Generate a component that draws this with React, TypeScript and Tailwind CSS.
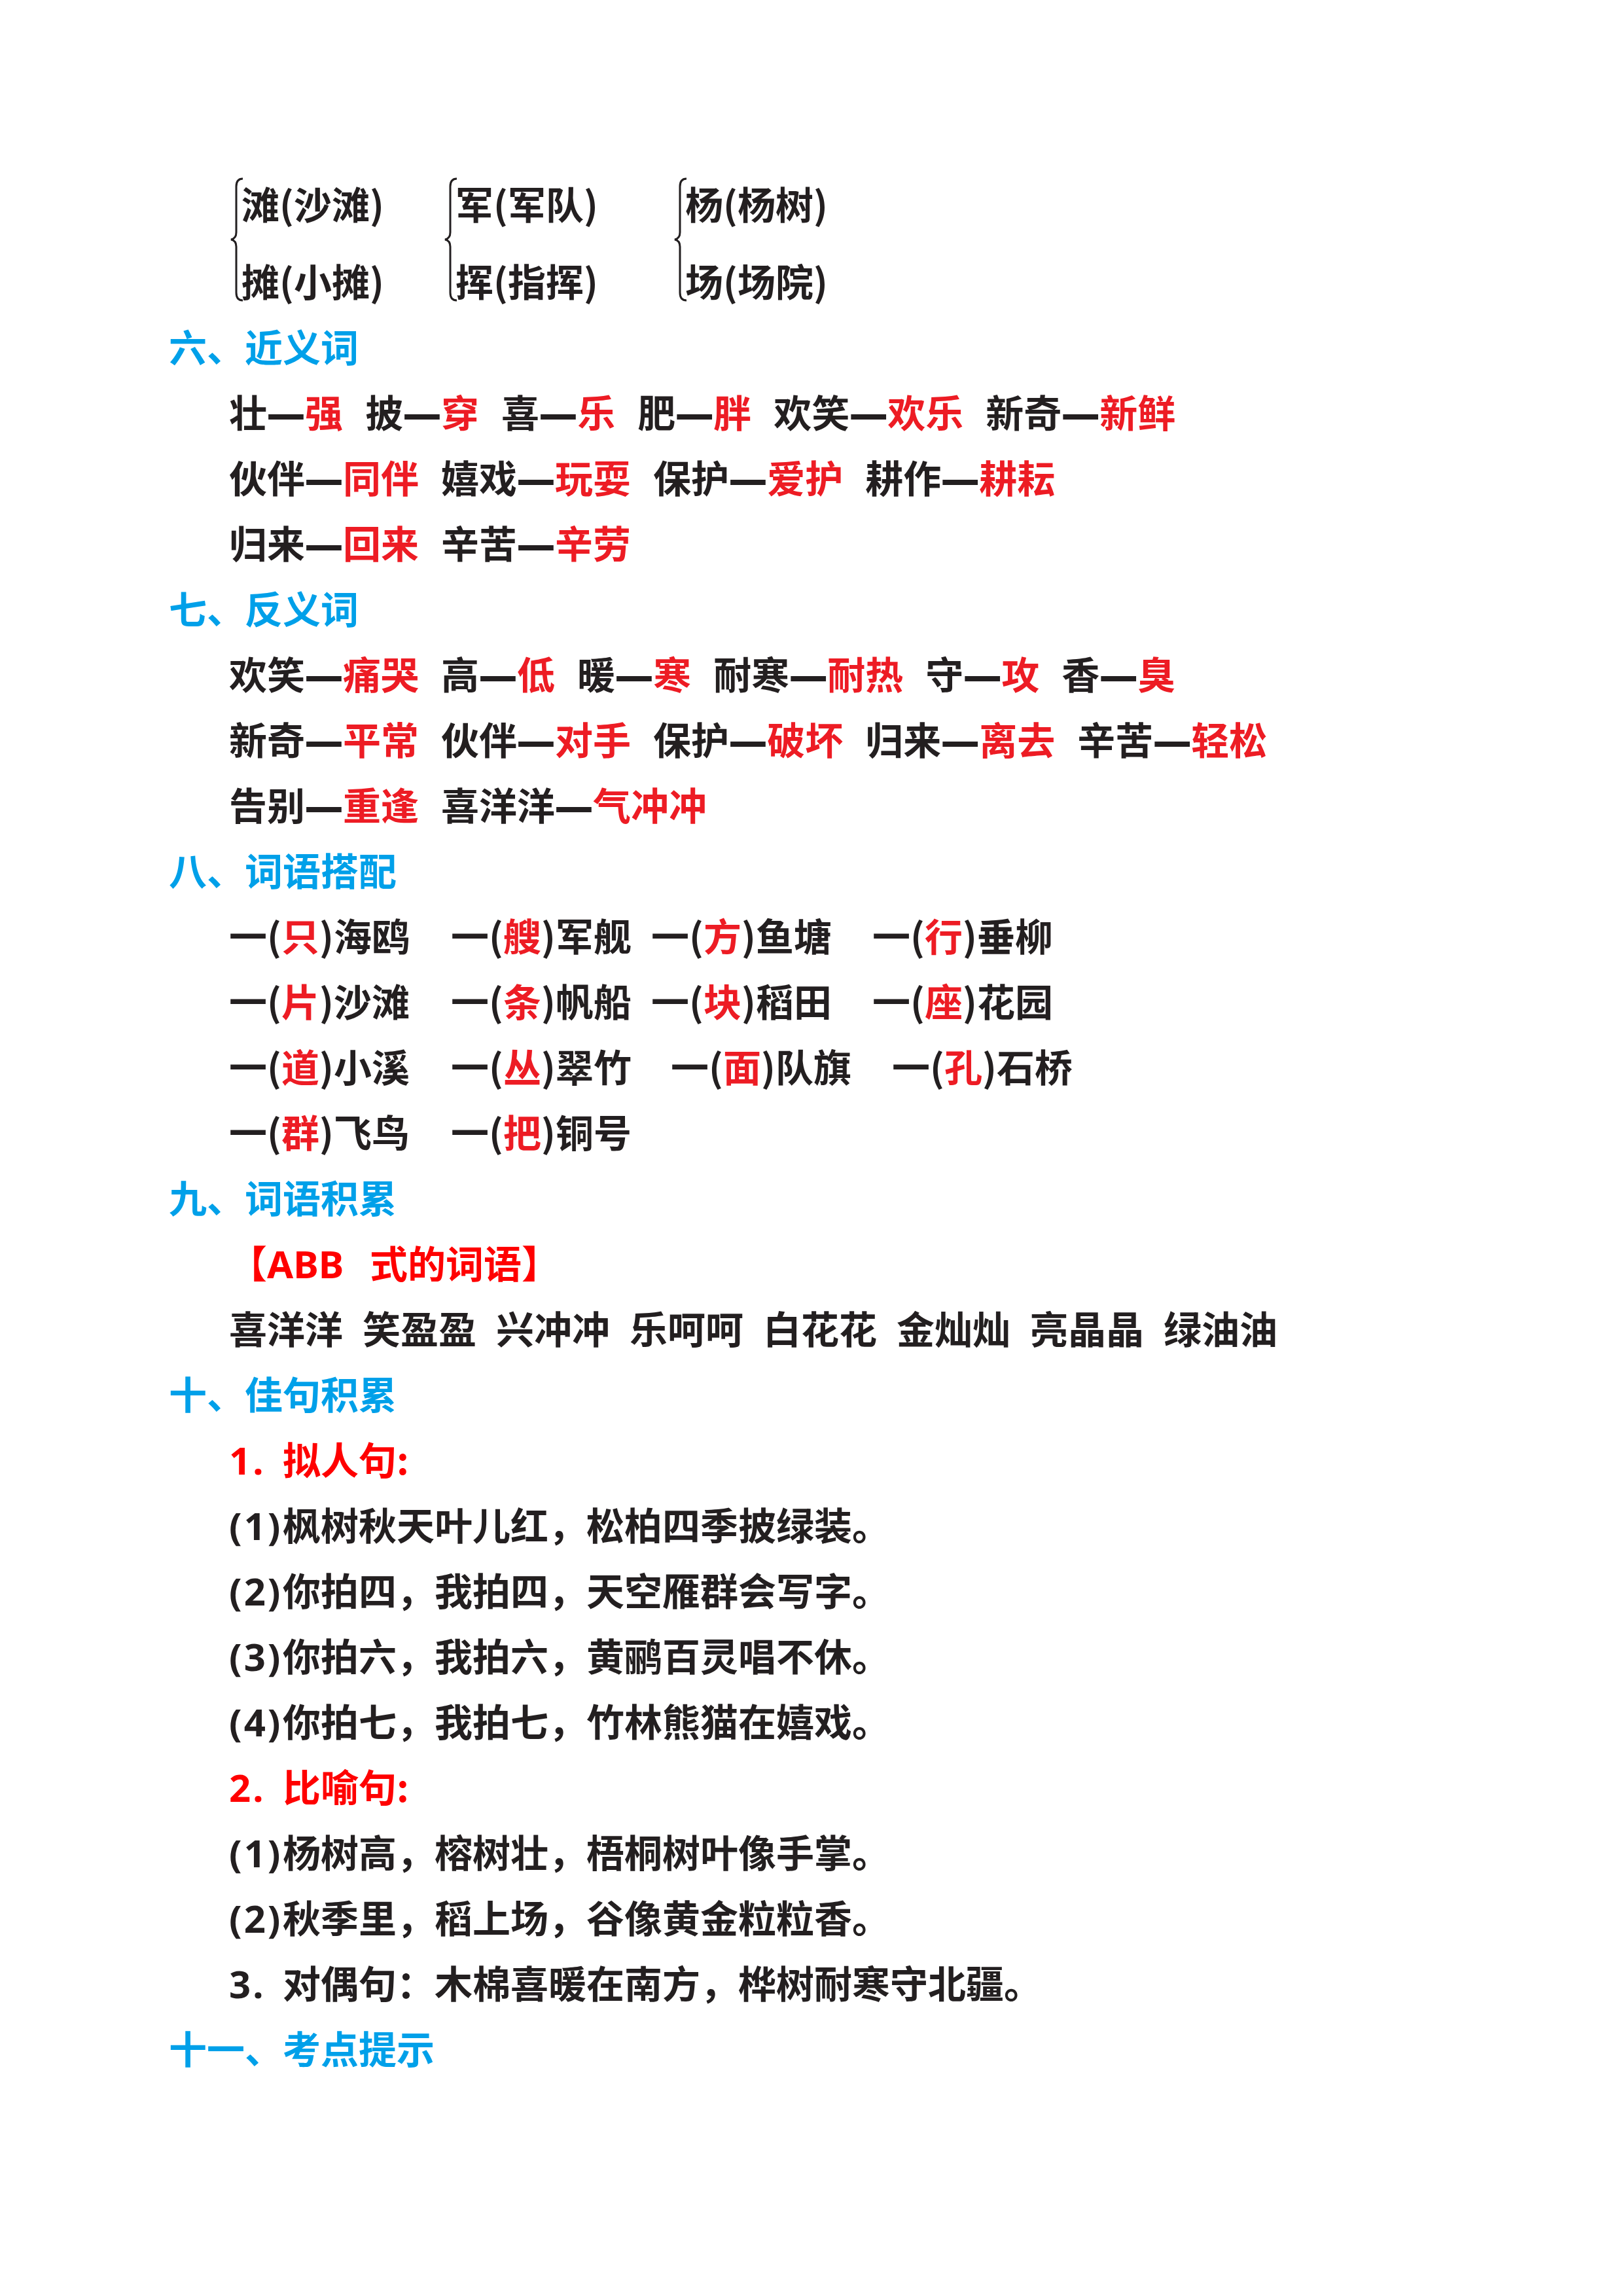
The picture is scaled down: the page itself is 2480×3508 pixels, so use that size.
import type { ReactNode } from "react";

const R = ({ children }: { children: ReactNode }) => <span className="text-[#ed1c24]">{children}</span>;

// em dash from Noto Sans: a full em wide and heavy enough
const Dash = () => <span className="font-black font-['Noto_Sans',sans-serif]">—</span>;

function Brace() {
  return (
    <svg viewBox="0 0 22 190" className="w-[22px] h-[190px] shrink-0">
      <path
        d="M20 2 C13 2 10 6 10 14 L10 84 C10 91 7 94 2 95 C7 96 10 99 10 106 L10 176 C10 184 13 188 20 188"
        fill="none"
        stroke="#231f20"
        strokeWidth="3"
      />
    </svg>
  );
}

const braces = [
  { w: "w-[327px]", rows: ["滩(沙滩)", "摊(小摊)"] },
  { w: "w-[351px]", rows: ["军(军队)", "挥(指挥)"] },
  { w: "", rows: ["杨(杨树)", "场(场院)"] },
];

type Pair = [string, string];

const synonyms: Pair[][] = [
  [["壮", "强"], ["披", "穿"], ["喜", "乐"], ["肥", "胖"], ["欢笑", "欢乐"], ["新奇", "新鲜"]],
  [["伙伴", "同伴"], ["嬉戏", "玩耍"], ["保护", "爱护"], ["耕作", "耕耘"]],
  [["归来", "回来"], ["辛苦", "辛劳"]],
];

const antonyms: Pair[][] = [
  [["欢笑", "痛哭"], ["高", "低"], ["暖", "寒"], ["耐寒", "耐热"], ["守", "攻"], ["香", "臭"]],
  [["新奇", "平常"], ["伙伴", "对手"], ["保护", "破坏"], ["归来", "离去"], ["辛苦", "轻松"]],
  [["告别", "重逢"], ["喜洋洋", "气冲冲"]],
];

// measure word rows, each item gets a fixed box so columns line up like the sheet
const measures: { w: string; m: string; n: string }[][] = [
  [
    { w: "w-[339px]", m: "只", n: "海鸥" },
    { w: "w-[306px]", m: "艘", n: "军舰" },
    { w: "w-[338px]", m: "方", n: "鱼塘" },
    { w: "", m: "行", n: "垂柳" },
  ],
  [
    { w: "w-[339px]", m: "片", n: "沙滩" },
    { w: "w-[306px]", m: "条", n: "帆船" },
    { w: "w-[338px]", m: "块", n: "稻田" },
    { w: "", m: "座", n: "花园" },
  ],
  [
    { w: "w-[339px]", m: "道", n: "小溪" },
    { w: "w-[336px]", m: "丛", n: "翠竹" },
    { w: "w-[338px]", m: "面", n: "队旗" },
    { w: "", m: "孔", n: "石桥" },
  ],
  [
    { w: "w-[339px]", m: "群", n: "飞鸟" },
    { w: "", m: "把", n: "铜号" },
  ],
];

const abb = ["喜洋洋", "笑盈盈", "兴冲冲", "乐呵呵", "白花花", "金灿灿", "亮晶晶", "绿油油"];

function Heading({ children }: { children: ReactNode }) {
  return <div className="h-[100px] leading-[100px] text-[#00a0e9]">{children}</div>;
}

function Line({ children, className = "" }: { children: ReactNode; className?: string }) {
  return <div className={`h-[100px] leading-[100px] pl-[92px] whitespace-nowrap ${className}`}>{children}</div>;
}

function PairRow({ items }: { items: Pair[] }) {
  return (
    <Line className="flex gap-[34px]">
      {items.map(([a, b]) => (
        <span key={a + b}>
          {a}
          <Dash />
          <R>{b}</R>
        </span>
      ))}
    </Line>
  );
}

function Numbered({ n, children, red }: { n: string; children: ReactNode; red?: boolean }) {
  return (
    <Line className={red ? "text-[#ff0000]" : ""}>
      <span className="inline-block w-[82px] tracking-[3px] font-['Noto_Sans',sans-serif]">{n}</span>
      {children}
    </Line>
  );
}

export default function App() {
  return (
    <div className="w-[2480px] h-[3508px] bg-white pl-[258px] pt-[271px] font-bold text-[58px] text-[#231f20] font-['Noto_Sans_CJK_SC','Noto_Sans',sans-serif]">
      <div className="flex ml-[93px] mb-[11px]">
        {braces.map((b) => (
          <div key={b.rows[0]} className={`flex items-start ${b.w}`}>
            <Brace />
            <div className="flex flex-col gap-[40px] -ml-[4px]">
              {b.rows.map((r) => (
                <div key={r} className="h-[78px] leading-[78px] whitespace-nowrap">
                  {r}
                </div>
              ))}
            </div>
          </div>
        ))}
      </div>

      <Heading>六、近义词</Heading>
      {synonyms.map((row, i) => (
        <PairRow key={i} items={row} />
      ))}

      <Heading>七、反义词</Heading>
      {antonyms.map((row, i) => (
        <PairRow key={i} items={row} />
      ))}

      <Heading>八、词语搭配</Heading>
      {measures.map((row, i) => (
        <Line key={i} className="flex">
          {row.map((it) => (
            <span key={it.m} className={`shrink-0 ${it.w}`}>
              一(<R>{it.m}</R>){it.n}
            </span>
          ))}
        </Line>
      ))}

      <Heading>九、词语积累</Heading>
      <Line className="text-[#ff0000]">
        【<span className="inline-block w-[157px] font-['Noto_Sans',sans-serif]">ABB</span>式的词语】
      </Line>
      <Line className="flex gap-[30px]">
        {abb.map((w) => (
          <span key={w}>{w}</span>
        ))}
      </Line>

      <Heading>十、佳句积累</Heading>
      <Numbered n="1." red>
        拟人句:
      </Numbered>
      <Numbered n="(1)">枫树秋天叶儿红，松柏四季披绿装。</Numbered>
      <Numbered n="(2)">你拍四，我拍四，天空雁群会写字。</Numbered>
      <Numbered n="(3)">你拍六，我拍六，黄鹂百灵唱不休。</Numbered>
      <Numbered n="(4)">你拍七，我拍七，竹林熊猫在嬉戏。</Numbered>
      <Numbered n="2." red>
        比喻句:
      </Numbered>
      <Numbered n="(1)">杨树高，榕树壮，梧桐树叶像手掌。</Numbered>
      <Numbered n="(2)">秋季里，稻上场，谷像黄金粒粒香。</Numbered>
      <Numbered n="3.">对偶句：木棉喜暖在南方，桦树耐寒守北疆。</Numbered>

      <Heading>十一、考点提示</Heading>
    </div>
  );
}
